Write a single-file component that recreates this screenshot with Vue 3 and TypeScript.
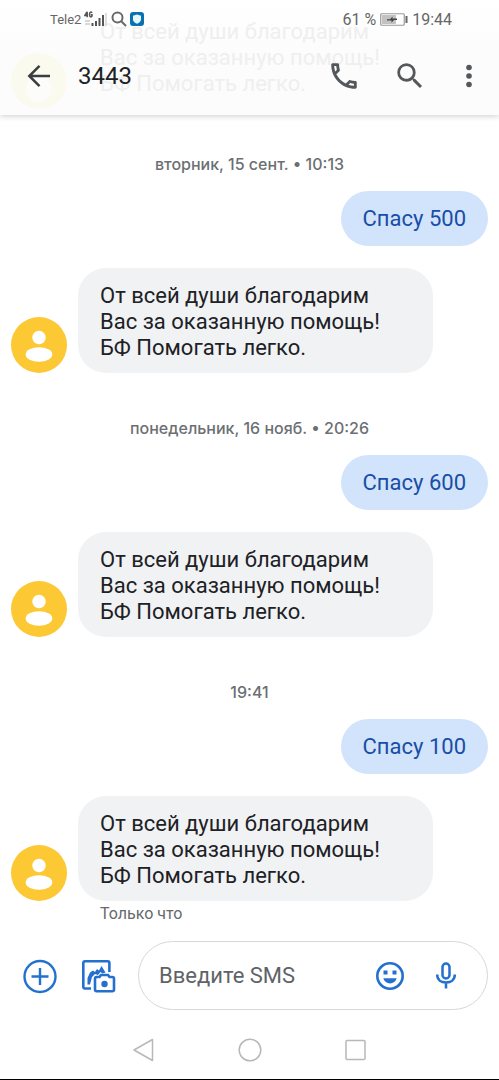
<script setup lang="ts">
import { ref } from 'vue'

interface Exchange {
  id: number
  time: string
  sent: string
  note?: string
}

const replyLines: string[] = ['От всей души благодарим', 'Вас за оказанную помощь!', 'БФ Помогать легко.']

const exchanges: Exchange[] = [
  { id: 1, time: 'вторник, 15 сент. • 10:13', sent: 'Спасу 500' },
  { id: 2, time: 'понедельник, 16 нояб. • 20:26', sent: 'Спасу 600' },
  { id: 3, time: '19:41', sent: 'Спасу 100', note: 'Только что' },
]

const draft = ref('')
</script>

<template>
  <div class="screen">
    <header class="top">
      <!-- Scrolled message showing faintly through the translucent bar -->
      <div class="under" aria-hidden="true">
        <span class="under-avatar"></span>
        <p class="under-text"><span v-for="line in replyLines" :key="line">{{ line }}</span></p>
      </div>

      <div class="status">
        <div class="status-side left">
          <span class="carrier">Tele2</span>
          <svg class="signal" width="24" height="16" viewBox="0 0 24 16">
            <path d="M3 0.800L0.800 4.500H4M3.200 0.800V6.200M8 1.800C7.300 0.600 5.500 0.700 5.500 3.500S7.800 6.600 8 4.800V3.700H6.800" fill="none" stroke="#555" stroke-width="1.500" />
            <path d="M1 10h5M1 13h5" stroke="#ccc" stroke-width="1.500" />
            <path d="M8.500 12v3M12 10v5M15.500 7v8M19 4v11" stroke="#555" stroke-width="2" />
            <path d="M22 2v13" stroke="#d8d8d8" stroke-width="1.700" />
          </svg>
          <svg width="16" height="16" viewBox="0 0 16 16" fill="none" stroke="#686868" stroke-width="2">
            <circle cx="6.500" cy="6.500" r="5" /><path d="M10 10l5 5" />
          </svg>
          <svg class="shield" width="14" height="14" viewBox="0 0 14 14">
            <rect width="14" height="14" rx="3" fill="#0b70b0" />
            <path d="M7 2.500l4 1.200v3.500c0 2.200-1.700 3.800-4 4.600-2.300-.8-4-2.400-4-4.600V3.700z" fill="#e6f6fd" />
          </svg>
        </div>
        <div class="status-side">
          <span>61 %</span>
          <svg width="28" height="13" viewBox="0 0 28 13">
            <rect x=".75" y=".75" width="23.500" height="11.500" rx="1" fill="#fff" stroke="#999" stroke-width="1.200" />
            <rect x="2" y="2" width="14" height="9" fill="#c2c2c2" />
            <path d="M7 6.300H10L12.500 3.500V5.600H17V7H14L11.500 9.800V7.600H7z" fill="#444" />
            <path d="M26.500 3v7" stroke="#666" stroke-width="2" />
          </svg>
          <span>19:44</span>
        </div>
      </div>

      <div class="bar">
        <button class="icon" type="button" aria-label="Назад">
          <svg width="24" height="24" viewBox="0 0 24 24" fill="none" stroke="#3b3e40" stroke-width="2.500">
            <path d="M23 12H2.500M12.500 1.800L2.300 12l10.200 10.200" />
          </svg>
        </button>
        <h1 class="title">3443</h1>
        <button class="icon" type="button" aria-label="Позвонить">
          <svg width="34" height="34" viewBox="0 0 24 24" fill="#55585b">
            <path d="M6.540 5c.06.890.210 1.760.450 2.590l-1.200 1.200c-.410-1.200-.670-2.470-.760-3.790h1.510m9.860 12.020c.850.240 1.720.390 2.600.450v1.490c-1.320-.090-2.590-.350-3.800-.750l1.200-1.190M7.500 3H4c-.550 0-1 .450-1 1 0 9.390 7.610 17 17 17 .550 0 1-.450 1-1v-3.490c0-.550-.450-1-1-1-1.240 0-2.450-.200-3.570-.570-.100-.040-.210-.050-.310-.050-.260 0-.510.100-.710.290l-2.200 2.200c-2.830-1.450-5.150-3.760-6.590-6.590l2.200-2.200c.280-.280.360-.670.250-1.020C8.700 6.450 8.500 5.250 8.500 4c0-.550-.450-1-1-1z" />
          </svg>
        </button>
        <button class="icon find" type="button" aria-label="Поиск">
          <svg width="34" height="34" viewBox="0 0 24 24" fill="#55585b">
            <path d="M15.500 14h-.790l-.280-.270A6.470 6.470 0 0 0 16 9.500 6.500 6.500 0 1 0 9.500 16c1.610 0 3.090-.590 4.230-1.570l.270.280v.790l5 4.990L20.490 19l-4.990-5zm-6 0C7.010 14 5 11.990 5 9.500S7.010 5 9.500 5 14 7.010 14 9.500 11.990 14 9.500 14z" />
          </svg>
        </button>
        <button class="icon more" type="button" aria-label="Ещё">
          <svg width="8" height="24" viewBox="0 0 8 24" fill="#55585b">
            <circle cx="4" cy="3.500" r="2.800" /><circle cx="4" cy="12" r="2.800" /><circle cx="4" cy="20.500" r="2.800" />
          </svg>
        </button>
      </div>
    </header>

    <main class="thread">
      <section v-for="item in exchanges" :key="item.id" class="exchange">
        <time class="time">{{ item.time }}</time>
        <p class="bubble sent">{{ item.sent }}</p>
        <div class="received-row">
          <svg class="avatar" width="56" height="56" viewBox="0 0 56 56">
            <circle cx="28" cy="28" r="28" fill="#fcc934" />
            <circle cx="28" cy="20.500" r="6.700" fill="#fff" />
            <ellipse cx="28" cy="37.500" rx="13.300" ry="7.300" fill="#fff" />
          </svg>
          <p class="bubble received"><span v-for="line in replyLines" :key="line">{{ line }}</span></p>
        </div>
        <p v-if="item.note" class="note">{{ item.note }}</p>
      </section>
    </main>

    <form class="composer" @submit.prevent>
      <button class="icon" type="button" aria-label="Добавить">
        <svg width="36" height="36" viewBox="0 0 36 36" fill="none" stroke="#2470cf" stroke-width="2.400">
          <circle cx="18" cy="18.500" r="15.500" /><path d="M18 10v17M9.500 18.500h17" />
        </svg>
      </button>
      <button class="icon" type="button" aria-label="Галерея и камера">
        <svg width="36" height="36" viewBox="0 0 36 36" fill="none" stroke="#2470cf" stroke-width="2.600">
          <path d="M11 30.500H5Q3.300 30.500 3.300 28.800V5Q3.300 3.300 5 3.300H27.700Q29.400 3.300 29.400 5V14" />
          <path d="M7.500 26.500V20L10 14.500L13 12.500L15 14L17 11L19 12.500L21.500 8L25.500 14.500L22.500 15.500L20.500 14L18 17L15 16L12 19L10 26.500Z" fill="#2470cf" stroke="none" />
          <path d="M15 20.700Q15 19 16.700 19H19.500L21 17H28L29.500 19H32.300Q34 19 34 20.700V31.500Q34 33.200 32.300 33.200H16.700Q15 33.200 15 31.500Z" fill="#fff" />
          <circle cx="24.500" cy="26" r="3.200" fill="#2470cf" stroke="none" />
        </svg>
      </button>
      <div class="field">
        <input v-model="draft" class="entry" type="text" placeholder="Введите SMS" aria-label="Введите SMS" />
        <button class="icon" type="button" aria-label="Эмодзи">
          <svg width="30" height="30" viewBox="0 0 30 30">
            <circle cx="15" cy="15" r="12.700" fill="none" stroke="#2470cf" stroke-width="2.600" />
            <path d="M8.500 9.500h4v4h-4zM17.500 9.500h4v4h-4zM8.300 17.300h13.400c-1 3.200-3.500 5.200-6.700 5.200s-5.700-2-6.700-5.200z" fill="#2470cf" />
          </svg>
        </button>
        <button class="icon" type="button" aria-label="Голосовой ввод">
          <svg width="22" height="30" viewBox="0 0 22 30" fill="none" stroke="#2470cf" stroke-width="2.500">
            <rect x="7.500" y="2.500" width="7" height="15" rx="3.500" />
            <path d="M2.200 13.500c0 5.200 3.800 8 8.800 8s8.800-2.800 8.800-8M11 21.500v6" />
          </svg>
        </button>
      </div>
    </form>

    <nav class="system">
      <button class="icon" type="button" aria-label="Системная кнопка «Назад»">
        <svg width="24" height="24" viewBox="0 0 24 24" fill="none" stroke="#b8b8b8" stroke-width="1.500" stroke-linejoin="round">
          <path d="M20.500 1.500V22.500L2 12z" />
        </svg>
      </button>
      <button class="icon" type="button" aria-label="Домой">
        <svg width="24" height="24" viewBox="0 0 24 24" fill="none" stroke="#b8b8b8" stroke-width="1.500"><circle cx="12" cy="12" r="10.800" /></svg>
      </button>
      <button class="icon" type="button" aria-label="Недавние">
        <svg width="24" height="24" viewBox="0 0 24 24" fill="none" stroke="#b8b8b8" stroke-width="1.500"><rect x="2" y="2.500" width="19" height="19" rx="1" /></svg>
      </button>
    </nav>
  </div>
</template>

<style>
body {
  margin: 0;
  background: #fff;
}
</style>

<style scoped>
.screen {
  display: flex;
  flex-direction: column;
  min-height: 100vh;
  box-sizing: border-box;
  border-bottom: 1px solid #000;
  background: #fff;
  color: #202124;
  font-family: Roboto, "Noto Sans", sans-serif;
}

p,
h1 {
  margin: 0;
  font-weight: 400;
}

.icon {
  display: flex;
  align-items: center;
  justify-content: center;
  padding: 0;
  border: 0;
  background: none;
}

.top {
  position: relative;
  background: linear-gradient(#fff, #fcfcfc 50%);
  box-shadow: 0 1px 6px rgba(0, 0, 0, 0.2);
}

.under {
  position: absolute;
  inset: 0;
  overflow: hidden;
}

.under-avatar {
  position: absolute;
  left: 11px;
  top: 53px;
  width: 56px;
  height: 56px;
  border-radius: 50%;
  background: radial-gradient(circle at 50% 64%, #fcfcfa 12px, #fbfaef 14px);
}

.under-text {
  position: absolute;
  left: 100px;
  top: 19px;
  font-size: 22px;
  line-height: 26px;
  color: #efefef;
}

.under-text span,
.received span {
  display: block;
  white-space: nowrap;
}

.status {
  position: relative;
  display: flex;
  justify-content: space-between;
  height: 38px;
  padding: 0 47px 0 50px;
  font-size: 16px;
  color: #666;
}

.status-side {
  display: flex;
  align-items: center;
  gap: 4px;
}

.left {
  gap: 3px;
}

.carrier {
  font-size: 13px;
}

.bar {
  position: relative;
  display: flex;
  align-items: center;
  height: 75px;
  padding: 0 26px 2px 27px;
}

.title {
  flex: 1;
  margin-left: 27px;
  font-size: 24px;
  line-height: 28px;
}

.find {
  margin-left: 32px;
}

.more {
  margin-left: 38px;
}

.thread {
  display: flex;
  flex: 1;
  flex-direction: column;
  gap: 45px;
  padding: 39px 11px 0;
}

.exchange {
  display: flex;
  flex-direction: column;
}

.time {
  align-self: center;
  margin-bottom: 17px;
  font-family: Inter, Roboto, sans-serif;
  font-size: 16px;
  font-weight: 500;
  line-height: 20px;
  color: #6c6f73;
}

.bubble {
  border-radius: 28px;
  font-size: 22px;
  line-height: 26px;
}

.sent {
  align-self: flex-end;
  margin-bottom: 22px;
  padding: 15px 22px 14px;
  background: #d2e3fc;
  color: #174ea6;
}

.received-row {
  display: flex;
  align-items: flex-end;
  gap: 11px;
}

.received {
  flex: 0 1 311px;
  padding: 15px 22px 12px;
  background: #f1f2f4;
}

.avatar {
  flex: none;
}

.note {
  padding-left: 89px;
  font-size: 16px;
  line-height: 26px;
  color: #66696d;
}

.composer {
  display: flex;
  align-items: center;
  gap: 22px;
  padding: 0 11px 0 22px;
}

.field {
  display: flex;
  flex: 1;
  align-items: center;
  gap: 30px;
  min-width: 0;
  height: 69px;
  box-sizing: border-box;
  padding: 0 30px 0 20px;
  border: 1px solid #d8d8d8;
  border-radius: 35px;
}

.entry {
  flex: 1;
  min-width: 0;
  padding: 0;
  border: 0;
  outline: 0;
  background: none;
  font-family: inherit;
  font-size: 22px;
  line-height: 26px;
  color: #202124;
}

.entry::placeholder {
  color: #5f6368;
  opacity: 1;
}

.system {
  display: flex;
  align-items: center;
  justify-content: center;
  gap: 82px;
  height: 59px;
  padding-top: 10px;
}
</style>
